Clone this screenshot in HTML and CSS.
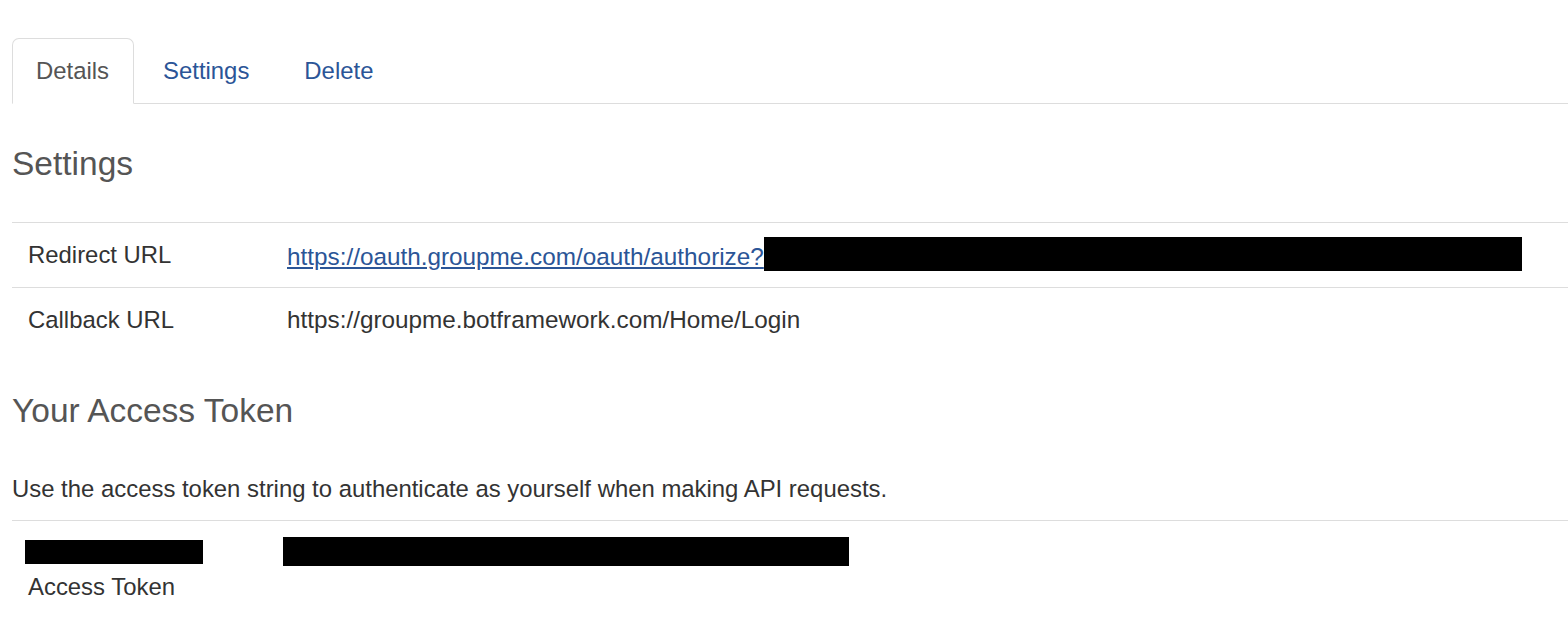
FILE: index.html
```html
<!DOCTYPE html>
<html>
<head>
<meta charset="utf-8">
<link rel="stylesheet" href="styles.css">
</head>
<body>
<div class="page">
  <ul class="tabs">
    <li class="tab active"><a>Details</a></li>
    <li class="tab"><a>Settings</a></li>
    <li class="tab"><a>Delete</a></li>
  </ul>

  <h4 class="heading settings-heading">Settings</h4>
  <table class="kv">
    <tr>
      <td class="key">Redirect URL</td>
      <td class="val"><a class="link">https://oauth.groupme.com/oauth/authorize?</a><span class="redact redact-url"></span></td>
    </tr>
    <tr>
      <td class="key">Callback URL</td>
      <td class="val">https://groupme.botframework.com/Home/Login</td>
    </tr>
  </table>

  <h4 class="heading token-heading">Your Access Token</h4>
  <p class="desc">Use the access token string to authenticate as yourself when making API requests.</p>
  <div class="token-row">
    <div class="token-key">
      <span class="redact redact-name"></span>
      <span class="token-label">Access Token</span>
    </div>
    <div class="token-val"><span class="redact redact-token"></span></div>
  </div>
</div>
</body>
</html>
```

FILE: styles.css
```css
* { box-sizing: border-box; }
html, body { margin: 0; padding: 0; background: #fff; }
body {
  font-family: "Liberation Sans", Arial, sans-serif;
  font-size: 23.9px;
  color: #333;
  overflow: hidden;
}
.page {
  padding: 38px 0 0 12px;
}
.tabs {
  list-style: none;
  margin: 0;
  padding: 0;
  display: flex;
  border-bottom: 1px solid #ddd;
  height: 66px;
}
.tab {
  margin-right: 3px;
  margin-bottom: -1px;
}
.tab a {
  display: block;
  height: 66px;
  padding: 15px 25px 0 25px;
  line-height: 34px;
  color: #2b5597;
  border: 1px solid transparent;
  border-radius: 7px 7px 0 0;
}
.tab:first-child a { padding-left: 23px; padding-right: 24px; }
.tab.active a {
  color: #555;
  background: #fff;
  border-color: #ddd #ddd transparent #ddd;
}
.heading {
  font-weight: 400;
  color: #555;
  font-size: 33.5px;
  line-height: 34px;
  margin: 0;
}
.settings-heading { margin-top: 43px; margin-bottom: 41px; }
.kv {
  border-collapse: collapse;
  width: 100%;
  font-size: 24.3px;
}
.kv td {
  border-top: 1px solid #ddd;
  height: 65px;
  padding: 0 16px;
  vertical-align: middle;
  line-height: 34px;
  white-space: nowrap;
}
.kv td.key { width: 259px; font-size: 23.9px; }
.link {
  color: #2b5597;
  text-decoration: underline;
}
.redact {
  display: inline-block;
  background: #000;
}
.redact-url {
  width: 758px;
  height: 34px;
  vertical-align: -6px;
}
.token-heading { margin-top: 41px; }
.desc {
  margin: 44px 0 0 0;
  line-height: 34px;
}
.token-row {
  margin-top: 14px;
  border-top: 1px solid #ddd;
  display: flex;
  padding-top: 16px;
}
.token-key {
  width: 259px;
  display: flex;
  flex-direction: column;
  padding-left: 13px;
}
.redact-name { width: 178px; height: 24px; margin-top: 3px; }
.token-label { padding-left: 3px; line-height: 34px; margin-top: 6px; }
.token-val { padding-left: 12px; }
.redact-token { width: 566px; height: 29px; margin-top: 0; }
```
